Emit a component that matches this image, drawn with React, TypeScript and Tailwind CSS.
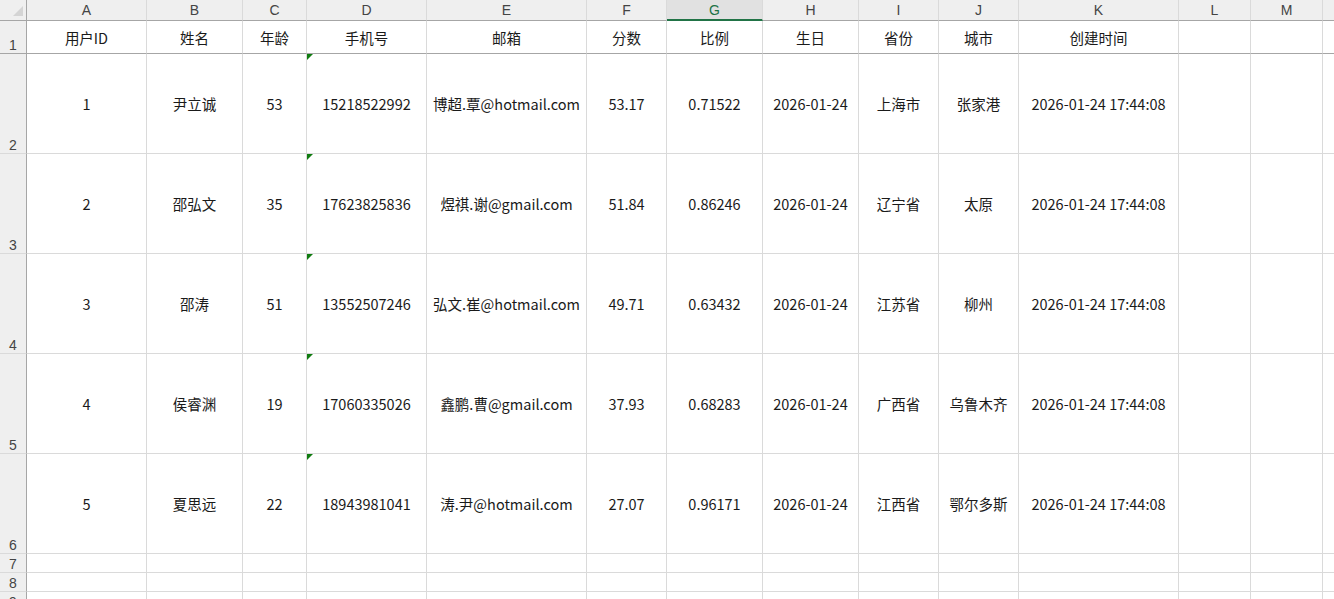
import React from "react";

const cols = [
  { l: "A", w: 120 },
  { l: "B", w: 96 },
  { l: "C", w: 64 },
  { l: "D", w: 120 },
  { l: "E", w: 160 },
  { l: "F", w: 80 },
  { l: "G", w: 96 },
  { l: "H", w: 96 },
  { l: "I", w: 80 },
  { l: "J", w: 80 },
  { l: "K", w: 160 },
  { l: "L", w: 72 },
  { l: "M", w: 72 },
  { l: "", w: 40 },
];

const header = ["用户ID", "姓名", "年龄", "手机号", "邮箱", "分数", "比例", "生日", "省份", "城市", "创建时间", "", "", ""];

const data = [
  ["1", "尹立诚", "53", "15218522992", "博超.覃@hotmail.com", "53.17", "0.71522", "2026-01-24", "上海市", "张家港", "2026-01-24 17:44:08"],
  ["2", "邵弘文", "35", "17623825836", "煜祺.谢@gmail.com", "51.84", "0.86246", "2026-01-24", "辽宁省", "太原", "2026-01-24 17:44:08"],
  ["3", "邵涛", "51", "13552507246", "弘文.崔@hotmail.com", "49.71", "0.63432", "2026-01-24", "江苏省", "柳州", "2026-01-24 17:44:08"],
  ["4", "侯睿渊", "19", "17060335026", "鑫鹏.曹@gmail.com", "37.93", "0.68283", "2026-01-24", "广西省", "乌鲁木齐", "2026-01-24 17:44:08"],
  ["5", "夏思远", "22", "18943981041", "涛.尹@hotmail.com", "27.07", "0.96171", "2026-01-24", "江西省", "鄂尔多斯", "2026-01-24 17:44:08"],
];

const font = { fontFamily: '"Noto Sans CJK SC", "Noto Sans", sans-serif' };

function RowHead({ n, h, dark }: { n: string; h: number; dark?: boolean }) {
  return (
    <div
      className={`w-[27px] shrink-0 bg-[#efefef] border-r border-r-[#a6a6a6] border-b flex items-end justify-center pb-[1px] text-[14px] leading-none text-[#444] ${dark ? "border-b-[#a6a6a6]" : "border-b-[#dadada]"}`}
      style={{ height: h, fontFamily: '"Liberation Sans", sans-serif' }}
    >
      {n}
    </div>
  );
}

export default function App() {
  return (
    <div className="w-[1334px] h-[599px] overflow-hidden bg-white text-[14.5px] text-[#1a1a1a]" style={font}>
      {/* column header */}
      <div className="flex h-[21px]">
        <div className="w-[27px] shrink-0 bg-[#efefef] border-r border-b border-[#a6a6a6] relative">
          <div className="absolute right-[3px] bottom-[4px] w-0 h-0 border-l-[10px] border-l-transparent border-b-[10px] border-b-[#d4d4d4]" />
        </div>
        {cols.map((c, i) => (
          <div
            key={i}
            className={`shrink-0 flex items-center justify-center text-[14px] leading-none border-r border-r-[#dadada] ${c.l === "G" ? "bg-[#e1e1e1] border-b-2 border-b-[#217346] text-[#217346]" : "bg-[#efefef] border-b border-b-[#a6a6a6] text-[#444]"}`}
            style={{ width: c.w, fontFamily: '"Liberation Sans", sans-serif' }}
          >
            {c.l}
          </div>
        ))}
      </div>
      {/* row 1 */}
      <div className="flex h-[33px]">
        <RowHead n="1" h={33} dark />
        {cols.map((c, i) => (
          <div
            key={i}
            className="shrink-0 flex items-center justify-center border-r border-r-[#dadada] border-b border-b-[#a6a6a6] pt-[2px]"
            style={{ width: c.w }}
          >
            {header[i]}
          </div>
        ))}
      </div>
      {data.map((r, ri) => (
        <div key={ri} className="flex h-[100px]">
          <RowHead n={String(ri + 2)} h={100} />
          {cols.map((c, i) => (
            <div
              key={i}
              className="shrink-0 relative flex items-center justify-center border-r border-b border-[#dadada] whitespace-nowrap"
              style={{ width: c.w }}
            >
              {i === 3 && (
                <div className="absolute left-0 top-0 w-0 h-0 border-t-[6px] border-t-[#107c10] border-r-[6px] border-r-transparent" />
              )}
              {r[i] ?? ""}
            </div>
          ))}
        </div>
      ))}
      {["7", "8", "9"].map((n) => (
        <div key={n} className="flex h-[19px]">
          <RowHead n={n} h={19} />
          {cols.map((c, i) => (
            <div key={i} className="shrink-0 border-r border-b border-[#dadada]" style={{ width: c.w }} />
          ))}
        </div>
      ))}
    </div>
  );
}
